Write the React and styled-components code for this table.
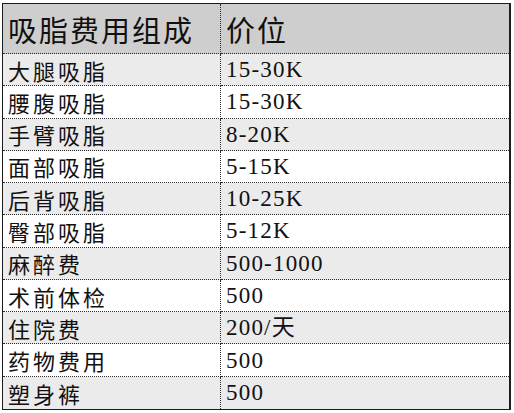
import styled, { createGlobalStyle } from "styled-components";

const GlobalStyle = createGlobalStyle`
  body {
    margin: 0;
    background: #ffffff;
  }
`;

const Table = styled.div`
  box-sizing: border-box;
  margin: 3px 0 0 2px;
  width: 509px;
  height: 407px;
  border: 1px solid #1c1c1c;
  border-right-width: 2px;
  display: grid;
  grid-template-columns: 218px 1fr;
  grid-template-rows: 50px repeat(11, 1fr);
  color: #111;
`;

const Cell = styled.div`
  box-sizing: border-box;
  display: flex;
  align-items: center;
  padding-left: 5px;
  background: ${(p) => (p.$header ? "#cfcece" : p.$shade ? "#ebebeb" : "#ffffff")};
  border-bottom: ${(p) => (p.$last ? "none" : "1px dotted #2a2a2a")};
  border-right: ${(p) => (p.$first ? "1px dotted #2a2a2a" : "none")};
  overflow: hidden;
  white-space: nowrap;
`;

const HeadText = styled.span`
  font-family: "Noto Sans CJK SC", sans-serif;
  font-weight: 400;
  font-size: 29px;
  letter-spacing: 2px;
  line-height: 1;
  margin-top: 2px;
`;

const NameText = styled.span`
  font-family: "Noto Sans CJK SC", sans-serif;
  font-size: 22px;
  letter-spacing: 3px;
  line-height: 1;
`;

const PriceText = styled.span`
  font-family: "Liberation Serif", "Noto Sans CJK SC", serif;
  font-size: 23px;
  letter-spacing: 1.2px;
  line-height: 1;
`;

const rows = [
  ["大腿吸脂", "15-30K"],
  ["腰腹吸脂", "15-30K"],
  ["手臂吸脂", "8-20K"],
  ["面部吸脂", "5-15K"],
  ["后背吸脂", "10-25K"],
  ["臀部吸脂", "5-12K"],
  ["麻醉费", "500-1000"],
  ["术前体检", "500"],
  ["住院费", "200/天"],
  ["药物费用", "500"],
  ["塑身裤", "500"],
];

const App = () => {
  return (
    <>
      <GlobalStyle />
      <Table>
        <Cell $header $first>
          <HeadText>吸脂费用组成</HeadText>
        </Cell>
        <Cell $header>
          <HeadText>价位</HeadText>
        </Cell>
        {rows.map(([name, price], i) => {
          const shade = i % 2 === 0;
          const last = i === rows.length - 1;
          return [
            <Cell key={name + "a"} $first $shade={shade} $last={last}>
              <NameText>{name}</NameText>
            </Cell>,
            <Cell key={name + "b"} $shade={shade} $last={last}>
              <PriceText>{price}</PriceText>
            </Cell>,
          ];
        })}
      </Table>
    </>
  );
};

export default App;
